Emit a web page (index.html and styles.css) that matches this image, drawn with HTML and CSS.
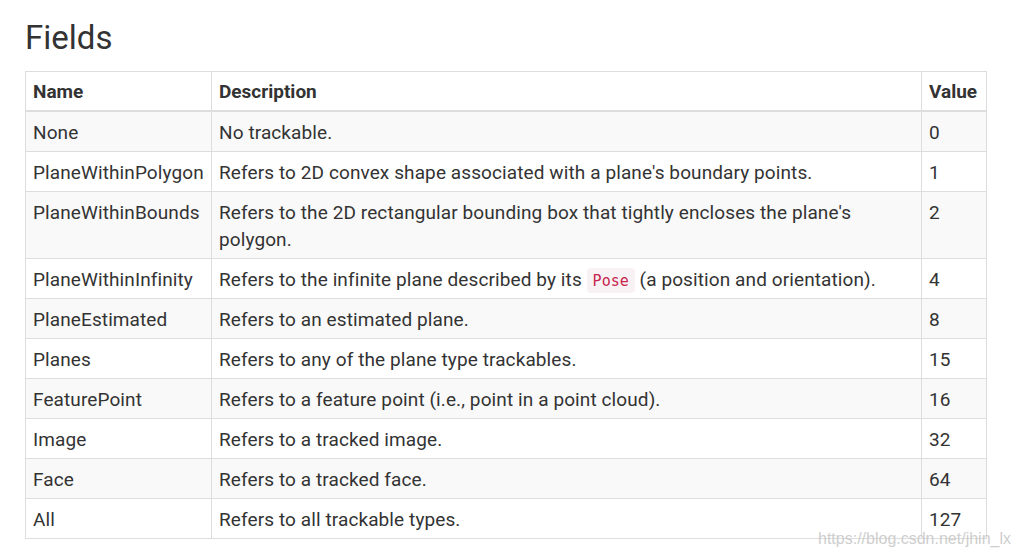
FILE: index.html
```html
<!DOCTYPE html>
<html>
<head>
<meta charset="utf-8">
<link rel="stylesheet" href="styles.css">
</head>
<body>
<div class="page">
  <h2 class="title">Fields</h2>
  <table class="fields">
    <colgroup>
      <col class="c-name">
      <col class="c-desc">
      <col class="c-val">
    </colgroup>
    <thead>
      <tr><th>Name</th><th>Description</th><th>Value</th></tr>
    </thead>
    <tbody>
      <tr><td>None</td><td>No trackable.</td><td>0</td></tr>
      <tr><td>PlaneWithinPolygon</td><td>Refers to 2D convex shape associated with a plane's boundary points.</td><td>1</td></tr>
      <tr><td>PlaneWithinBounds</td><td>Refers to the 2D rectangular bounding box that tightly encloses the plane's polygon.</td><td>2</td></tr>
      <tr><td>PlaneWithinInfinity</td><td>Refers to the infinite plane described by its <code>Pose</code> (a position and orientation).</td><td>4</td></tr>
      <tr><td>PlaneEstimated</td><td>Refers to an estimated plane.</td><td>8</td></tr>
      <tr><td>Planes</td><td>Refers to any of the plane type trackables.</td><td>15</td></tr>
      <tr><td>FeaturePoint</td><td>Refers to a feature point (i.e., point in a point cloud).</td><td>16</td></tr>
      <tr><td>Image</td><td>Refers to a tracked image.</td><td>32</td></tr>
      <tr><td>Face</td><td>Refers to a tracked face.</td><td>64</td></tr>
      <tr><td>All</td><td>Refers to all trackable types.</td><td>127</td></tr>
    </tbody>
  </table>
  <div class="watermark">https://blog.csdn.net/jhin_lx</div>
</div>
</body>
</html>
```

FILE: styles.css
```css
html, body {
  margin: 0;
  padding: 0;
  background: #fff;
}
body {
  font-family: Roboto, "Liberation Sans", sans-serif;
  color: #333;
}
.page {
  position: relative;
  width: 1020px;
  height: 557px;
  padding: 18px 0 0 25px;
  box-sizing: border-box;
}
.title {
  margin: 0 0 13px 0;
  font-size: 33px;
  font-weight: 400;
  line-height: 40px;
  color: #333;
}
.fields {
  border-collapse: collapse;
  width: 961px;
  table-layout: fixed;
  font-size: 19px;
  line-height: 27px;
  letter-spacing: 0.1px;
}
.c-name { width: 186px; }
.c-desc { width: 710px; }
.c-val { width: 65px; }
.fields th,
.fields td {
  border: 1px solid #ddd;
  padding: 7px 7px 5px 7px;
  text-align: left;
  vertical-align: top;
}
.fields th {
  font-weight: 700;
  font-size: 19px;
  letter-spacing: 0;
  padding-top: 6px;
  padding-bottom: 5px;
  border-bottom: 2px solid #ddd;
  color: #333;
}
.fields tbody tr:nth-child(odd) {
  background: #f9f9f9;
}
.fields code {
  font-family: "DejaVu Sans Mono", "Liberation Mono", monospace;
  font-size: 15px;
  line-height: 1;
  letter-spacing: 0;
  color: #c7254e;
  background: #f9f2f4;
  border-radius: 4px;
  padding: 4px 6px 3px 6px;
}
.watermark {
  position: absolute;
  left: 818px;
  top: 530px;
  font-family: "Liberation Sans", Arial, sans-serif;
  font-size: 16px;
  color: rgba(200, 200, 200, 0.9);
}
```
